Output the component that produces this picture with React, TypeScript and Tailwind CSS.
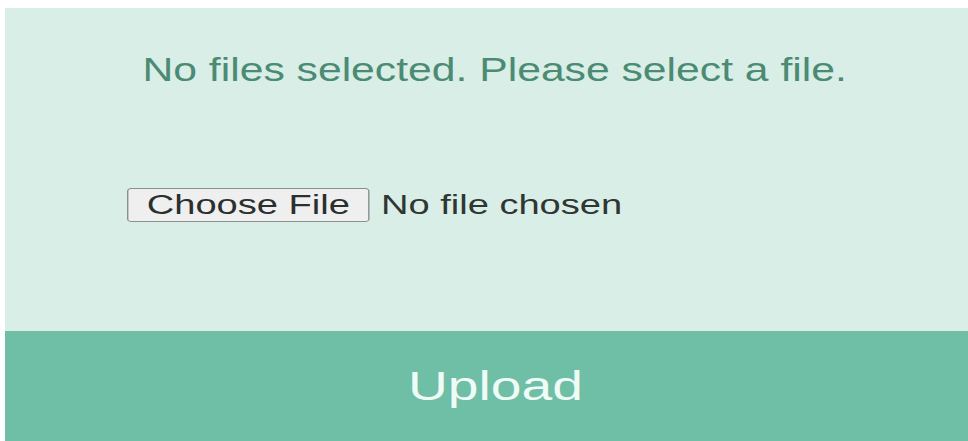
import { useState } from "react";

const FileUpload = () => {
  const [fileName, setFileName] = useState<string | null>(null);

  return (
    <div className="bg-white pt-2 pl-[5px] font-['Liberation_Sans',Arial,sans-serif]">
      <div className="bg-[#d9eee6]">
        <div className="pt-[42px] pl-[17px] flex justify-center">
          <p className="text-[34px] leading-[38px] text-[#4b8a73] scale-x-[1.255] whitespace-nowrap">
            {fileName ? `Selected: ${fileName}` : "No files selected. Please select a file."}
          </p>
        </div>

        <div className="pt-[100px] pb-[109px] pl-[122px] flex items-center">
          <label className="flex items-center leading-[31px] origin-left scale-x-[1.41] whitespace-nowrap cursor-pointer">
            <span className="h-[34px] px-[13px] flex items-center border border-[#8a8f8d] rounded-[3px] bg-[#efefef] text-[27px] text-[#2b302e]">
              Choose File
            </span>
            <span className="ml-[8px] text-[27px] text-[#2f3633]">
              {fileName ?? "No file chosen"}
            </span>
            <input
              type="file"
              className="hidden"
              onChange={(e) => setFileName(e.target.files?.[0]?.name ?? null)}
            />
          </label>
        </div>
      </div>

      <button className="w-full h-[110px] pl-[17px] flex items-center justify-center bg-[#6fbea6]">
        <span className="text-[40px] leading-none text-[#effbf7] scale-x-[1.38]">Upload</span>
      </button>
    </div>
  );
};

export default function App() {
  return <FileUpload />;
}
